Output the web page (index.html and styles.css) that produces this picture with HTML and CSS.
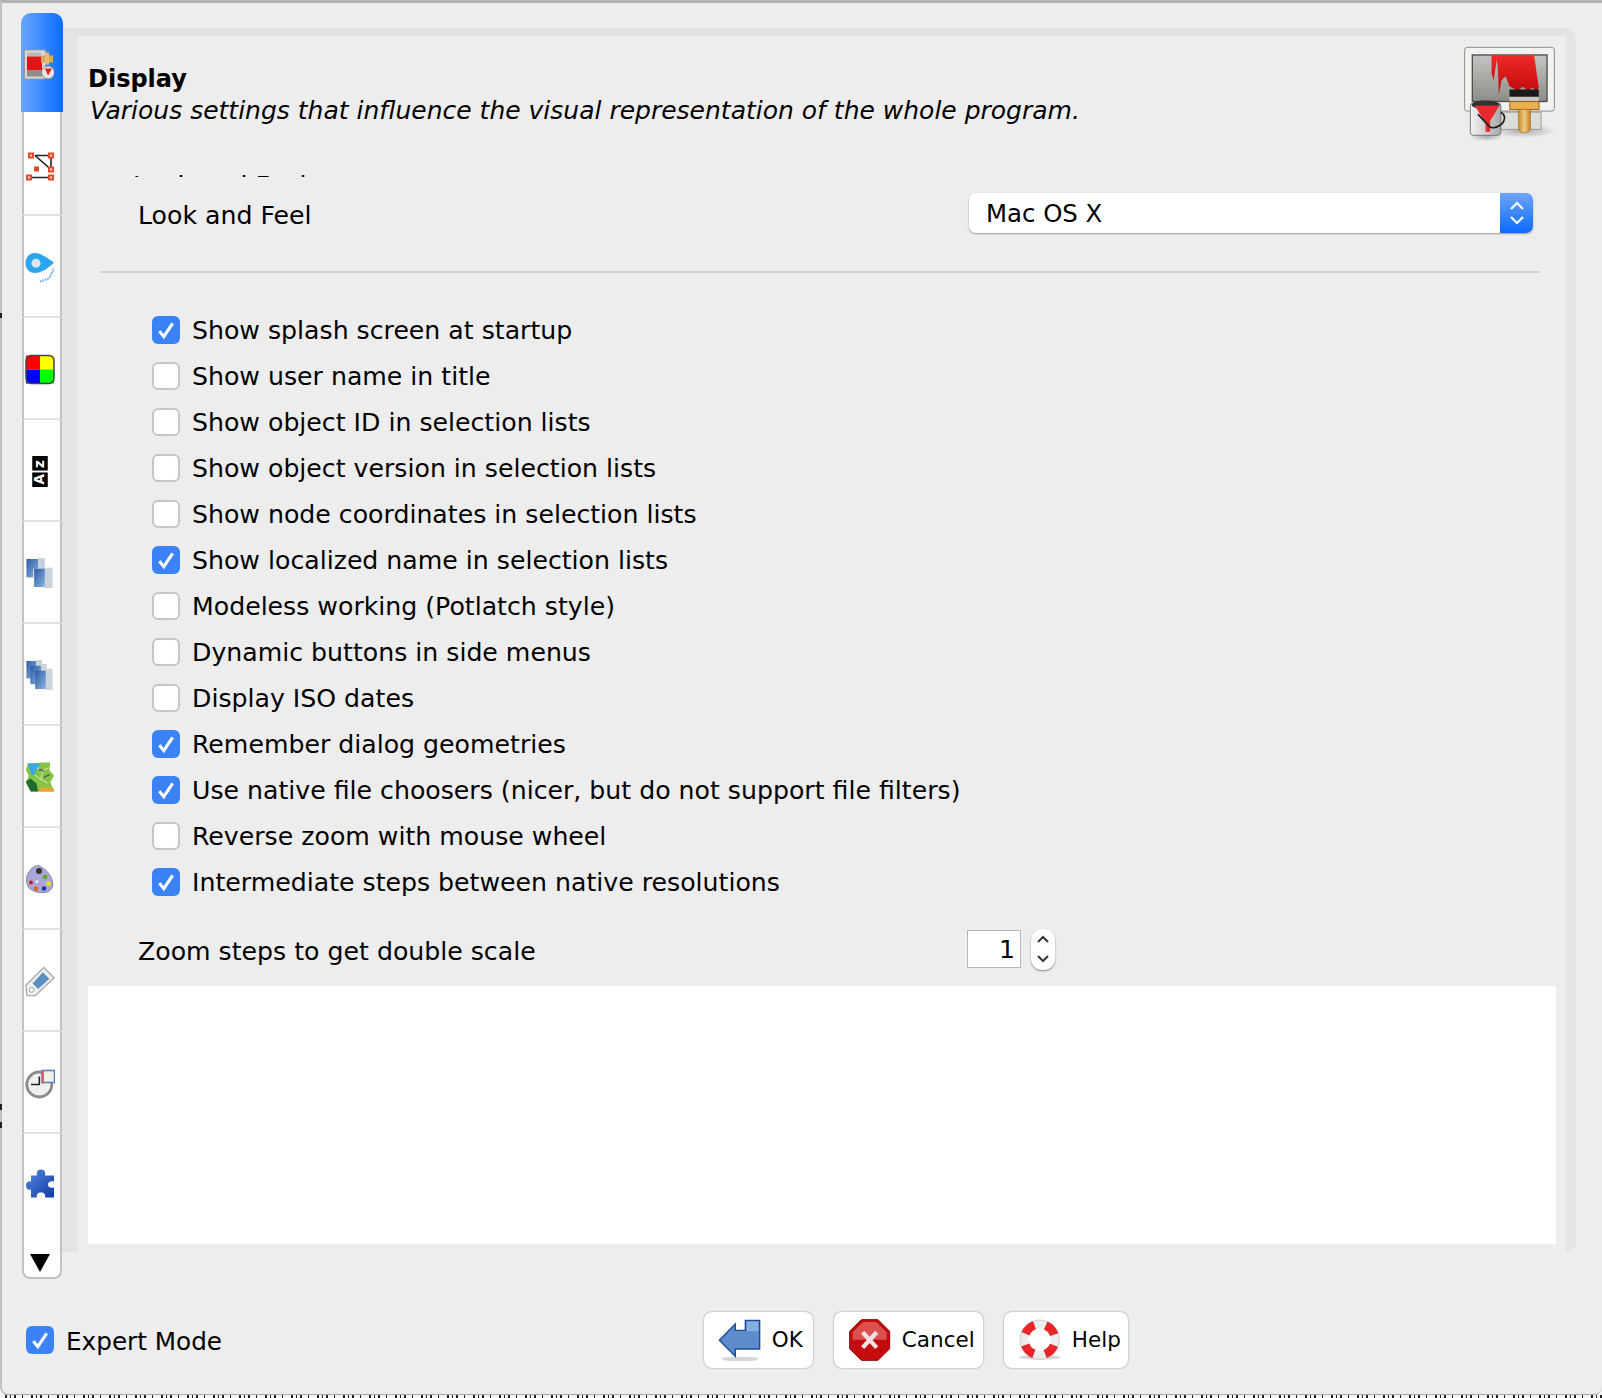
FILE: index.html
```html
<!DOCTYPE html>
<html lang="en">
<head>
<meta charset="utf-8">
<title>Preferences</title>
<link rel="stylesheet" href="styles.css">
</head>
<body>
<div class="window">
  <div class="main">
    <nav class="tabs">
      <div class="tab tab-active">
        <svg class="tab-icon" viewBox="0 0 30 30"><rect x="0.500" y="0.500" width="21" height="29" rx="1" fill="#d8d8d8" stroke="#9a9a9a"/><rect x="3" y="3" width="14" height="4" fill="#b8b8b8"/><rect x="3" y="7" width="15" height="14" fill="#e01414"/><rect x="3" y="21" width="15" height="6" fill="#8c8c8c"/><rect x="17" y="6" width="12" height="7" fill="#d8a860"/><rect x="21" y="3" width="4" height="12" fill="#e4bc78"/><circle cx="24" cy="23" r="6.500" fill="#e4e4e4" stroke="#8a8a8a"/><path d="M21 19h7l-4 7z" fill="#d22"/></svg>
      </div>
      <div class="tab tab-second">
        <svg class="tab-icon" viewBox="0 0 30 30"><path d="M10 3H26V17L10 3M5 25H26" fill="none" stroke="#222" stroke-width="1.600"/><g fill="#f4e0d8" stroke="#e04a2a" stroke-width="2"><rect x="4" y="1" width="4" height="4"/><rect x="24" y="1" width="4" height="4"/><rect x="24" y="15" width="4" height="4"/><rect x="2" y="23" width="4" height="4"/><rect x="24" y="23" width="4" height="4"/><rect x="10" y="15" width="3" height="3"/></g></svg>
      </div>
      <div class="tab">
        <svg class="tab-icon" viewBox="0 0 30 30"><path d="M10 0.500C16 0.500 23 6 29 10C24 15 17 20.500 10 20.500C4 20.500 0.500 16 0.500 10.500C0.500 5 4 0.500 10 0.500Z" fill="#2ba6ee"/><circle cx="11" cy="10.700" r="4.500" fill="#d8e6ee"/><path d="M15 29L24 26L29 16" fill="none" stroke="#58b0e8" stroke-width="2" stroke-dasharray="1.500 1"/></svg>
      </div>
      <div class="tab">
        <svg class="tab-icon" viewBox="0 0 30 30"><rect x="1" y="1" width="14" height="14" fill="#f00"/><rect x="15" y="1" width="14" height="14" fill="#ff0"/><rect x="1" y="15" width="14" height="14" fill="#00f"/><rect x="15" y="15" width="14" height="14" fill="#0f0"/><rect x="1" y="1" width="28" height="28" rx="5" fill="none" stroke="#444" stroke-width="1.500"/></svg>
      </div>
      <div class="tab">
        <svg class="tab-icon" viewBox="0 0 30 32"><rect x="7" y="0" width="16" height="15" fill="#000"/><rect x="7" y="17" width="16" height="15" fill="#000"/><text class="icon-letter" transform="translate(19.500 29.500) rotate(-90)">A</text><text class="icon-letter" transform="translate(19.500 12.500) rotate(-90)">z</text></svg>
      </div>
      <div class="tab">
        <svg class="tab-icon" viewBox="0 0 30 32"><defs><linearGradient id="pane" x1="0" y1="0" x2="1" y2="1"><stop offset="0" stop-color="#2c5ca4"/><stop offset="1" stop-color="#8cb2e0"/></linearGradient></defs><rect x="13" y="0" width="7" height="20" fill="#c8d2dc"/><rect x="1" y="1" width="12" height="19" fill="url(#pane)"/><rect x="20" y="10" width="8" height="21" fill="#ccd4da"/><rect x="8" y="11" width="12" height="19" fill="#e8eef4"/><rect x="9" y="11" width="11" height="19" fill="url(#pane)"/></svg>
      </div>
      <div class="tab">
        <svg class="tab-icon" viewBox="0 0 30 32"><rect x="11" y="0" width="6" height="19" fill="#c8d2dc"/><rect x="1" y="1" width="10" height="18" fill="url(#pane)"/><rect x="16" y="4" width="6" height="21" fill="#ccd4da"/><rect x="5" y="6" width="11" height="19" fill="url(#pane)"/><rect x="21" y="9" width="7" height="22" fill="#ccd4da"/><rect x="10" y="11" width="11" height="19" fill="url(#pane)"/></svg>
      </div>
      <div class="tab">
        <svg class="tab-icon" viewBox="0 0 32 32"><path d="M3 1L19 0H27L26 8L31 14L27 21L31 31H6L1 22L4 14L1 8Z" fill="#86c544"/><path d="M3 1H17L13 6L10 13H7L5 8Z" fill="#3aa8e4"/><path d="M1 20L6 17L12 22L14 31H6Z" fill="#1c6a34"/><path d="M15 27H30L31 31H16Z" fill="#f0a030"/><path d="M13 6L19 8L25 6M19 8L17 18L24 22M10 13L17 18" fill="none" stroke="#d8ecc0"/><path d="M15 7L20 9M20 16L26 13" stroke="#666" stroke-width="2"/></svg>
      </div>
      <div class="tab">
        <svg class="tab-icon" viewBox="0 0 30 30"><path d="M13 1C19 3 25 9 27 15C29 21 27 27 20 28C13 29 5 26 3 22C1 18 1 12 3 9C5 5 9 1 13 1Z" fill="#a8a8d8" stroke="#8a8a9a"/><circle cx="14" cy="6.500" r="3" fill="#333"/><circle cx="20" cy="12.500" r="2.300" fill="#5aaa20"/><circle cx="23.500" cy="19" r="2.300" fill="#f0e020"/><circle cx="6" cy="18" r="2" fill="#d81818"/><circle cx="11" cy="24" r="2.300" fill="#e06818"/><circle cx="19" cy="24" r="2.300" fill="#2030b0"/><circle cx="12" cy="17" r="1.500" fill="#eee"/></svg>
      </div>
      <div class="tab">
        <svg class="tab-icon" viewBox="0 0 32 32"><path d="M20 1L31 12L11 31L2 31L1 20Z" fill="#f0f0f0" stroke="#aaa" stroke-width="1.400"/><path d="M19 6L26 13L14 24L8 18Z" fill="#5a90c4"/><circle cx="7" cy="25" r="2.500" fill="#fff" stroke="#999"/></svg>
      </div>
      <div class="tab">
        <svg class="tab-icon" viewBox="0 0 30 30"><circle cx="14.300" cy="16" r="12.500" fill="#f0f0f0" stroke="#8a8a8a" stroke-width="2.800"/><path d="M14.300 8V16H6" fill="none" stroke="#222" stroke-width="1.600"/><rect x="17" y="2" width="12.500" height="12" fill="#f0f0f0" stroke="#5a80c0" stroke-width="1.600"/><rect x="17" y="2" width="2" height="13" fill="#e06060"/></svg>
      </div>
      <div class="tab tab-last">
        <svg class="tab-icon" viewBox="0 0 30 30"><defs><linearGradient id="puzzle" x1="0" y1="0" x2="1" y2="1"><stop offset="0" stop-color="#5a88dc"/><stop offset="1" stop-color="#0c3ca8"/></linearGradient></defs><path d="M6 7H12C11 3 13 1 16 1C19 1 21 3 20 7H29V13C25 12 23 14 23 16C23 18 25 20 29 19V29H20C21 26 19 24 16 24C13 24 11 26 12 29H6V21C3 22 1 20 1 17C1 14 3 12 6 13Z" fill="url(#puzzle)"/></svg>
      </div>
      <div class="tab-more">
        <svg class="tab-arrow" viewBox="0 0 20 18"><path d="M0 0H20L10 18Z" fill="#000"/></svg>
      </div>
    </nav>
    <section class="pane">
      <div class="pane-inner">
        <header class="head">
          <div class="head-text">
            <h1 class="head-title">Display</h1>
            <p class="head-sub">Various settings that influence the visual representation of the whole program.</p>
          </div>
          <svg class="head-icon" viewBox="130 135 280 290">
            <defs>
              <linearGradient id="scr" x1="0" y1="0" x2="0" y2="1"><stop offset="0" stop-color="#c4c4c2"/><stop offset="1" stop-color="#8c8c88"/></linearGradient>
              <linearGradient id="paint" x1="0" y1="0" x2="0" y2="1"><stop offset="0" stop-color="#f02a2a"/><stop offset="1" stop-color="#c00808"/></linearGradient>
              <linearGradient id="hand" x1="0" y1="0" x2="1" y2="0"><stop offset="0" stop-color="#c88c30"/><stop offset=".5" stop-color="#f0c880"/><stop offset="1" stop-color="#c08428"/></linearGradient>
              <linearGradient id="can" x1="0" y1="0" x2="1" y2="0"><stop offset="0" stop-color="#f4f4f4"/><stop offset="1" stop-color="#a8a8a8"/></linearGradient>
              <radialGradient id="shade"><stop offset="0" stop-color="#000" stop-opacity=".28"/><stop offset="1" stop-color="#000" stop-opacity="0"/></radialGradient>
            </defs>
            <ellipse cx="310" cy="392" rx="100" ry="22" fill="url(#shade)"/>
            <ellipse cx="200" cy="410" rx="50" ry="14" fill="url(#shade)"/>
            <rect x="240" y="336" width="125" height="52" fill="#dcdcd8" stroke="#9a9a96" stroke-width="3"/>
            <rect x="135" y="141" width="270" height="192" rx="8" fill="#f2f2f0" stroke="#8c8c88" stroke-width="3"/>
            <rect x="158" y="164" width="225" height="140" fill="url(#scr)" stroke="#4c4c4a" stroke-width="4"/>
            <path d="M216 164H344L358 262L350 274L340 262L325 272L310 260L295 272L270 258L258 228L246 240L238 282L235 205L232 178L222 240L216 220Z" fill="url(#paint)"/>
            <rect x="270" y="268" width="88" height="22" fill="#1a1a1a"/>
            <rect x="270" y="290" width="88" height="14" fill="#c8c8c4"/>
            <rect x="271" y="304" width="88" height="24" fill="#e8b050" stroke="#9a6410" stroke-width="3"/>
            <path d="M297 328H333V385C333 402 297 402 297 385Z" fill="url(#hand)" stroke="#a87020" stroke-width="2"/>
            <rect x="152" y="308" width="92" height="98" rx="10" fill="url(#can)" stroke="#777" stroke-width="3"/>
            <ellipse cx="198" cy="314" rx="42" ry="13" fill="#333"/>
            <path d="M165 316H240L212 362V395H198V368Z" fill="#e82a30"/>
            <path d="M175 342L210 380C228 390 255 372 255 352C255 345 250 340 244 336" fill="none" stroke="#1c1c1c" stroke-width="5"/>
          </svg>
        </header>
        <div class="clip-title"><span class="clip-text">Look and Feel</span></div>
        <div class="laf-row">
          <span class="label">Look and Feel</span>
          <div class="combo">
            <span class="combo-value">Mac OS X</span>
            <span class="combo-btn">
              <svg class="combo-arrows" viewBox="0 0 16 26"><path d="M2 9L8 3L14 9M2 17L8 23L14 17" fill="none" stroke="#fff" stroke-width="2.200"/></svg>
            </span>
          </div>
        </div>
        <hr class="sep">
        <ul class="checks">
          <li class="check-row"><span class="box box-on"><svg class="tick" viewBox="0 0 18 18"><path d="M3 10L7 15L15 3" fill="none" stroke="#fff" stroke-width="2.800"/></svg></span>Show splash screen at startup</li>
          <li class="check-row"><span class="box"></span>Show user name in title</li>
          <li class="check-row"><span class="box"></span>Show object ID in selection lists</li>
          <li class="check-row"><span class="box"></span>Show object version in selection lists</li>
          <li class="check-row"><span class="box"></span>Show node coordinates in selection lists</li>
          <li class="check-row"><span class="box box-on"><svg class="tick" viewBox="0 0 18 18"><path d="M3 10L7 15L15 3" fill="none" stroke="#fff" stroke-width="2.800"/></svg></span>Show localized name in selection lists</li>
          <li class="check-row"><span class="box"></span>Modeless working (Potlatch style)</li>
          <li class="check-row"><span class="box"></span>Dynamic buttons in side menus</li>
          <li class="check-row"><span class="box"></span>Display ISO dates</li>
          <li class="check-row"><span class="box box-on"><svg class="tick" viewBox="0 0 18 18"><path d="M3 10L7 15L15 3" fill="none" stroke="#fff" stroke-width="2.800"/></svg></span>Remember dialog geometries</li>
          <li class="check-row"><span class="box box-on"><svg class="tick" viewBox="0 0 18 18"><path d="M3 10L7 15L15 3" fill="none" stroke="#fff" stroke-width="2.800"/></svg></span>Use native file choosers (nicer, but do not support file filters)</li>
          <li class="check-row"><span class="box"></span>Reverse zoom with mouse wheel</li>
          <li class="check-row"><span class="box box-on"><svg class="tick" viewBox="0 0 18 18"><path d="M3 10L7 15L15 3" fill="none" stroke="#fff" stroke-width="2.800"/></svg></span>Intermediate steps between native resolutions</li>
        </ul>
        <div class="zoom-row">
          <span class="label zoom-label">Zoom steps to get double scale</span>
          <span class="num-input">1</span>
          <span class="spinner">
            <svg class="spin-arrows" viewBox="0 0 14 30"><path d="M2 8L7 3L12 8M2 22L7 27L12 22" fill="none" stroke="#333" stroke-width="2"/></svg>
          </span>
        </div>
        <div class="white-panel"></div>
      </div>
    </section>
  </div>
  <footer class="foot">
    <label class="expert"><span class="box box-on"><svg class="tick" viewBox="0 0 18 18"><path d="M3 10L7 15L15 3" fill="none" stroke="#fff" stroke-width="2.800"/></svg></span><span class="expert-text">Expert Mode</span></label>
    <div class="buttons">
      <button class="btn btn-ok">
        <svg class="btn-icon" viewBox="108 85 130 130"><ellipse cx="175" cy="208" rx="55" ry="7" fill="#bbb" opacity=".6"/><path d="M112 152L160 103V122H190V92H233V178H160V200Z" fill="#5c8ccc" stroke="#1c4c94" stroke-width="4"/><path d="M195 96H229V125H195Z" fill="#86aee0"/></svg>
        OK
      </button>
      <button class="btn btn-cancel">
        <svg class="btn-icon" viewBox="500 85 130 130"><path d="M540 90H590L625 125V177L590 212H540L505 177V125Z" fill="#c40c0c" stroke="#8c0808" stroke-width="3"/><path d="M545 97H585L616 128V150H514V128Z" fill="#dc5050"/><path d="M544 128L586 174M586 128L544 174" stroke="#f4e0e0" stroke-width="13"/></svg>
        Cancel
      </button>
      <button class="btn btn-help">
        <svg class="btn-icon" viewBox="1010 80 130 130"><ellipse cx="1075" cy="198" rx="62" ry="7" fill="#bbb" opacity=".6"/><circle cx="1075" cy="145" r="46" fill="none" stroke="#ececec" stroke-width="26"/><circle cx="1075" cy="145" r="59" fill="none" stroke="#aaa" stroke-width="1.500"/><circle cx="1075" cy="145" r="46" fill="none" stroke="#e8262a" stroke-width="26" stroke-dasharray="38 34.300" stroke-dashoffset="-17"/></svg>
        Help
      </button>
    </div>
  </footer>
</div>
<div class="desk-strip"></div>
<span class="desk-mark desk-mark-a"></span>
<span class="desk-mark desk-mark-b"></span>
<span class="desk-mark desk-mark-c"></span>
</body>
</html>
```
FILE: styles.css
```css
* { box-sizing: border-box; }
html, body { margin: 0; padding: 0; }
body {
  position: relative;
  width: 1602px;
  height: 1398px;
  overflow: hidden;
  background: #f4f4f4;
  font-family: "DejaVu Sans", "Liberation Sans", sans-serif;
  font-size: 25.2px;
  color: #000;
}
.window {
  width: 1602px;
  height: 1395px;
  background: #ededed;
  border-top: 3px solid #b4b4b4;
  border-left: 2px solid #c0c0c0;
  border-bottom: 1px solid #a8a8a8;
  border-radius: 0 0 8px 8px;
  display: flex;
  flex-direction: column;
}
.desk-strip {
  height: 3px;
  margin-left: 5px;
  background: repeating-linear-gradient(90deg, #222 0 2px, transparent 2px 5px, #222 5px 6px, transparent 6px 9px, #222 9px 11px, transparent 11px 17px, #222 17px 18px, transparent 18px 26px);
}
.desk-mark { position: absolute; left: 0; width: 2px; background: #222; }
.desk-mark-a { top: 313px; height: 5px; }
.desk-mark-b { top: 1104px; height: 6px; }
.desk-mark-c { top: 1122px; height: 6px; }
.main { display: flex; align-items: flex-start; padding-left: 19px; }
.tabs {
  width: 42px;
  margin-top: 10px;
  flex: none;
  position: relative;
  z-index: 1;
  display: flex;
  flex-direction: column;
  align-items: center;
}
.tab {
  width: 40px;
  height: 102px;
  background: #fff;
  border-left: 2px solid #c2c2c2;
  border-right: 2px solid #c2c2c2;
  border-bottom: 2px solid #e2e2e2;
  display: flex;
  align-items: center;
  justify-content: center;
  padding: 2px 4px 0 0;
}
.tab-active {
  width: 42px;
  height: 99px;
  border: 0;
  border-radius: 10px 10px 0 0;
  background: linear-gradient(90deg, #6aa6fb, #0b6cff);
  padding: 3px 6px 0 0;
}
.tab-second { height: 104px; padding-top: 8px; }
.tab-last { border-bottom: 0; padding: 0 4px 4px 0; }
.tab-icon { width: 30px; height: 31px; display: block; flex: none; }
.icon-letter { font-family: "DejaVu Sans", sans-serif; font-size: 14px; font-weight: bold; fill: #fff; }
.tab-more {
  width: 40px;
  height: 45px;
  margin-top: -2px;
  background: #fff;
  border: 2px solid #c2c2c2;
  border-top: 0;
  border-radius: 0 0 8px 8px;
  display: flex;
  justify-content: center;
  padding: 20px 4px 0 0;
}
.tab-arrow { width: 20px; height: 18px; display: block; }
.pane {
  width: 1514px;
  height: 1224px;
  margin-top: 25px;
  margin-left: -1px;
  background: #e4e4e4;
  border-radius: 0 10px 10px 0;
  padding: 8px 10px 0 16px;
}
.pane-inner {
  height: 100%;
  background: #ededed;
  padding: 0 10px 8px;
  display: flex;
  flex-direction: column;
}
.head { display: flex; justify-content: space-between; height: 139px; flex: none; }
.head-title { margin: 28px 0 0; font-size: 24px; font-weight: bold; line-height: 30px; }
.head-sub { margin: 1px 0 0 2px; font-size: 25px; font-style: italic; line-height: 32px; }
.head-icon { width: 93px; height: 97px; margin-top: 9px; flex: none; }
.clip-title { height: 2px; overflow: hidden; padding-left: 45px; flex: none; }
.clip-text { display: block; line-height: 32px; margin-top: -5.500px; }
.laf-row {
  display: flex;
  justify-content: space-between;
  align-items: center;
  height: 40px;
  padding: 0 23px 0 50px;
  margin-top: 16px;
  flex: none;
}
.label { line-height: 40px; margin-top: 6px; }
.combo {
  width: 564px;
  height: 40px;
  background: #fff;
  border-radius: 7px;
  box-shadow: 0 1px 2px rgba(0,0,0,.35);
  display: flex;
  justify-content: space-between;
  overflow: hidden;
}
.combo-value { padding-left: 17px; line-height: 41px; font-size: 24.400px; }
.combo-btn {
  width: 33px;
  background: linear-gradient(180deg, #6ea4f8, #0a6cff);
  display: flex;
  align-items: center;
  justify-content: center;
}
.combo-arrows { width: 16px; height: 28px; display: block; }
.sep {
  height: 2px;
  border: 0;
  margin: 38px 15px 0 11px;
  background: #d4d4d4;
  flex: none;
}
.checks { list-style: none; margin: 34px 0 0; padding: 0 0 0 64px; flex: none; }
.check-row { display: flex; align-items: center; height: 46px; white-space: nowrap; }
.box {
  width: 28px;
  height: 28px;
  margin-right: 12px;
  flex: none;
  background: #fff;
  border: 2px solid #c6c6c6;
  border-radius: 6px;
  display: flex;
  align-items: center;
  justify-content: center;
}
.box-on { background: #3b82f6; border: 0; }
.tick { width: 20px; height: 20px; display: block; }
.zoom-row { display: flex; align-items: center; height: 42px; padding-left: 50px; margin-top: 23px; flex: none; }
.zoom-label { width: 829px; }
.num-input {
  width: 54px;
  height: 38px;
  background: #fff;
  border: 1.500px solid #b8b8b8;
  text-align: right;
  padding-right: 5px;
  line-height: 38px;
}
.spinner {
  width: 24px;
  height: 41px;
  margin-left: 10px;
  background: #fff;
  border-radius: 11px;
  box-shadow: 0 1px 2px rgba(0,0,0,.45);
  display: flex;
  align-items: center;
  justify-content: center;
}
.spin-arrows { width: 14px; height: 30px; display: block; }
.white-panel { flex: 1; background: #fff; margin-top: 16px; }
.foot {
  flex: 1;
  display: flex;
  align-items: center;
  padding: 6px 0 0 24px;
}
.expert { display: flex; align-items: center; width: 678px; }
.expert-text { margin-top: 3px; font-size: 24.700px; }
.buttons { display: flex; gap: 21px; }
.btn {
  height: 56px;
  background: #fff;
  border: 0;
  border-radius: 8px;
  box-shadow: 0 0 2px rgba(0,0,0,.45);
  font: inherit;
  font-size: 21.500px;
  color: #000;
  display: flex;
  align-items: center;
  padding: 0 0 0 13.500px;
}
.btn-ok { width: 109px; }
.btn-cancel { width: 149px; }
.btn-help { width: 124px; }
.btn-icon { width: 43.333px; height: 43.333px; margin-right: 11px; flex: none; display: block; }
```
